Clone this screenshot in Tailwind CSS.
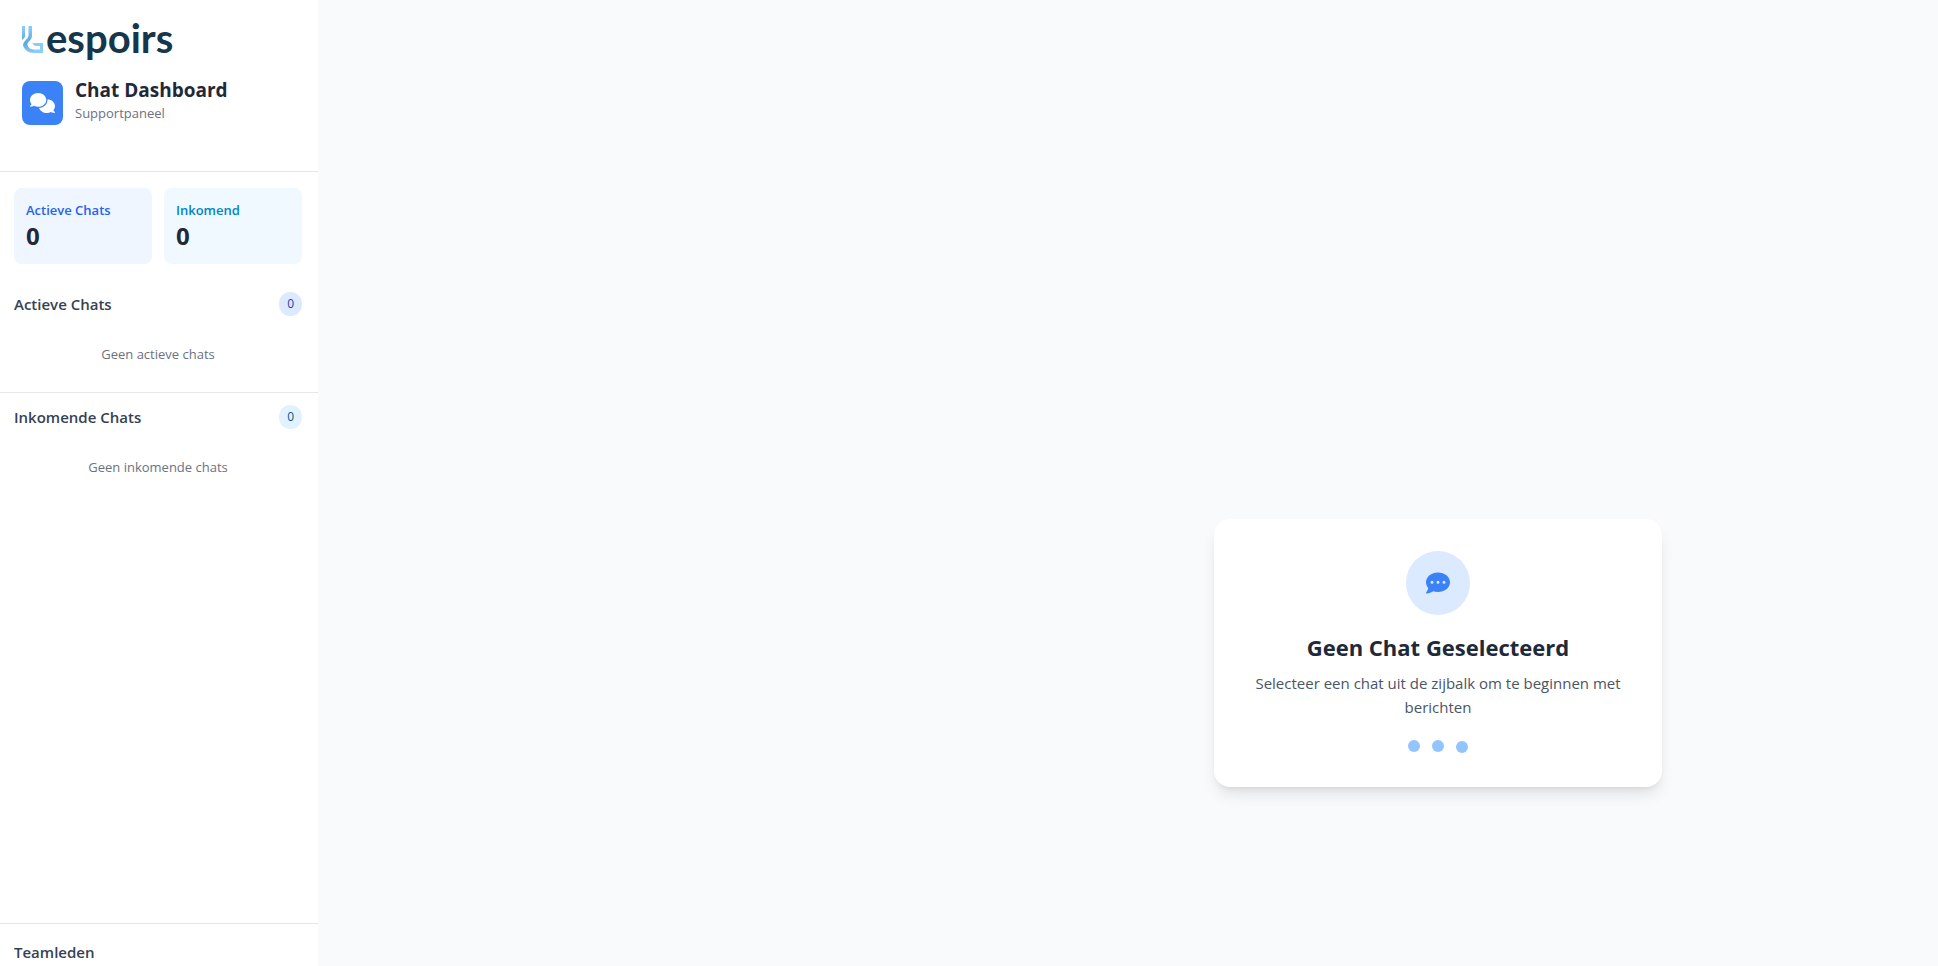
<!DOCTYPE html>
<html lang="nl">

    <head>
        <meta charset="UTF-8" />
        <meta name="viewport" content="width=device-width, initial-scale=1.0" />
        <title>Chat Dashboard</title>
        <script
            src="https://cdn.jsdelivr.net/npm/@tailwindcss/browser@4"></script>
    </head>

    <body
        class="flex h-screen overflow-hidden bg-[#f9fafb] font-['Segoe_UI','Open_Sans','Noto_Sans',sans-serif] text-gray-800">

        <!-- Sidebar -->
        <aside class="flex w-[318px] shrink-0 flex-col bg-white">
            <header class="border-b border-[#e5e7eb] px-[22px] pt-6 pb-[46px]">
                <a href="#" class="flex h-9 items-start" aria-label="Lespoirs">
                    <svg class="h-9 w-6 shrink-0" viewBox="0 0 24 36"
                        fill="none">
                        <defs>
                            <linearGradient id="stem" x1="0" y1="2" x2="0"
                                y2="29" gradientUnits="userSpaceOnUse">
                                <stop offset="0" stop-color="#8fd0fa" />
                                <stop offset=".4" stop-color="#6bb4e6" />
                                <stop offset=".65" stop-color="#5aa9e0" />
                                <stop offset="1" stop-color="#8bcdfa" />
                            </linearGradient>
                        </defs>
                        <path fill="url(#stem)" d="M0 2h3v10c0 1.500-1 2.500-3 4z" />
                        <path fill="url(#stem)"
                            d="M6.500 2H10v9c0 3-1 4.500-3 6.500-1.500 1.500-1.800 2.500-1.400 3.500.8 3 3 4.500 6.400 4.500V29C6 29 2.500 26 1 21.500c.2-2.200 1-3.800 3-5.800 1.800-1.800 2.500-2.700 2.500-4.700z" />
                        <path fill="#8bcdfa"
                            d="M11.500 25.500H18v-3.500h-5L10 19h11v10h-9.500z" />
                    </svg>
                    <span
                        class="font-[Lato,sans-serif] text-[40px] leading-7 font-bold text-[#15364c]">espoirs</span>
                </a>
                <div class="mt-4 flex items-end gap-3">
                    <div
                        class="mt-[5px] rounded-lg bg-[#3b82f6] px-2 py-3 text-white">
                        <svg class="h-5 w-[25px]" viewBox="0 0 640 512"
                            fill="currentColor">
                            <path
                                d="M208 352c114.900 0 208-78.800 208-176S322.900 0 208 0S0 78.800 0 176c0 38.600 14.700 74.300 39.600 103.400c-3.500 9.400-8.700 17.700-14.200 24.700c-4.800 6.200-9.700 11-13.300 14.300c-1.800 1.600-3.300 2.900-4.300 3.700c-.5 .4-.9 .7-1.100 .8l-.2 .2C1 327.200-1.400 334.400 .8 340.900S9.100 352 16 352c21.800 0 43.800-5.600 62.100-12.500c9.200-3.500 17.800-7.400 25.200-11.400C134.100 343.300 169.800 352 208 352zM448 176c0 112.300-99.100 196.900-216.500 207C255.800 457.400 336.400 512 432 512c38.200 0 73.900-8.700 104.700-23.900c7.500 4 16 7.900 25.200 11.400c18.300 6.900 40.300 12.500 62.100 12.500c6.900 0 13.100-4.500 15.200-11.100c2.100-6.600-.2-13.800-5.800-17.900l-.2-.2c-.2-.2-.6-.4-1.100-.8c-1-.8-2.500-2-4.300-3.700c-3.600-3.300-8.500-8.100-13.300-14.300c-5.500-7-10.700-15.400-14.200-24.700c24.900-29 39.600-64.700 39.600-103.400c0-92.800-84.900-168.900-192.600-175.500c.4 5.100 .6 10.300 .6 15.500z" />
                        </svg>
                    </div>
                    <div class="self-start">
                        <h1 class="text-[19px] leading-7 font-bold">Chat
                            Dashboard</h1>
                        <p class="text-[13px] leading-[18px] text-gray-500">Supportpaneel</p>
                    </div>
                </div>
            </header>

            <div class="grid grid-cols-2 gap-3 py-4 pr-4 pl-[14px]">
                <div class="rounded-lg bg-[#eff6ff] p-3">
                    <p
                        class="text-[13px] leading-5 font-semibold text-[#2563eb]">Actieve
                        Chats</p>
                    <p class="text-2xl font-bold">0</p>
                </div>
                <div class="rounded-lg bg-[#f0f9ff] p-3">
                    <p
                        class="text-[13px] leading-5 font-semibold text-[#0284c7]">Inkomend</p>
                    <p class="text-2xl font-bold">0</p>
                </div>
            </div>

            <section class="border-b border-[#e5e7eb] py-3 pr-4 pl-[14px]">
                <div class="mb-3 flex items-center justify-between">
                    <h2
                        class="text-[15px] leading-6 font-semibold text-gray-700">Actieve
                        Chats</h2>
                    <span
                        class="rounded-full bg-[#dbeafe] px-2 py-1 text-xs leading-4 text-[#1e40af]">0</span>
                </div>
                <p
                    class="py-4 text-center text-[13px] leading-5 text-gray-500">Geen
                    actieve chats</p>
            </section>

            <section class="flex-1 py-3 pr-4 pl-[14px]">
                <div class="mb-3 flex items-center justify-between">
                    <h2
                        class="text-[15px] leading-6 font-semibold text-gray-700">Inkomende
                        Chats</h2>
                    <span
                        class="rounded-full bg-[#e0f2fe] px-2 py-1 text-xs leading-4 text-[#075985]">0</span>
                </div>
                <p
                    class="py-4 text-center text-[13px] leading-5 text-gray-500">Geen
                    inkomende chats</p>
            </section>

            <section class="border-t border-[#e5e7eb] pt-4 pr-4 pb-[2px] pl-[14px]">
                <h2
                    class="text-[15px] leading-6 font-semibold text-gray-700">Teamleden</h2>
            </section>
        </aside>

        <!-- Empty state -->
        <main
            class="grid flex-1 grid-cols-[31fr_50fr] grid-rows-[170fr_313fr]">
            <div
                class="col-start-2 row-start-2 flex items-center justify-center">
                <div
                    class="w-full max-w-md rounded-2xl bg-white p-8 text-center shadow-lg">
                    <div
                        class="mx-auto mb-4 flex size-16 items-center justify-center rounded-full bg-[#dbeafe]">
                        <svg class="size-6 text-[#3b82f6]" viewBox="0 0 512 512"
                            fill="currentColor">
                            <path
                                d="M256 448c141.400 0 256-93.100 256-208S397.400 32 256 32S0 125.100 0 240c0 45.100 17.700 86.800 47.700 120.900c-1.900 24.500-11.400 46.300-21.400 62.900c-5.500 9.200-11.100 16.600-15.200 21.600c-2.100 2.500-3.700 4.400-4.900 5.700c-.6 .6-1 1.100-1.300 1.400l-.3 .3c-4.600 4.600-5.900 11.400-3.400 17.400c2.500 6 8.300 9.900 14.800 9.900c28.700 0 57.600-8.900 81.600-19.300c22.900-10 42.400-21.900 54.300-30.600c31.800 11.500 67 17.900 104.100 17.900zM128 208a32 32 0 1 1 0 64 32 32 0 1 1 0-64zm128 0a32 32 0 1 1 0 64 32 32 0 1 1 0-64zm96 32a32 32 0 1 1 64 0 32 32 0 1 1-64 0z" />
                        </svg>
                    </div>
                    <h2 class="mb-2 text-[22px] leading-8 font-bold">Geen Chat
                        Geselecteerd</h2>
                    <p class="text-[15px] leading-6 text-gray-600">Selecteer een
                        chat uit de zijbalk om te beginnen met berichten</p>
                    <!-- typing dots, each at its own point of the bounce -->
                    <div class="mt-6 flex justify-center gap-3">
                        <span
                            class="size-3 -translate-y-[3px] rounded-full bg-[#93c5fd]"></span>
                        <span
                            class="size-3 -translate-y-[3px] rounded-full bg-[#93c5fd]"></span>
                        <span
                            class="size-3 -translate-y-[2px] rounded-full bg-[#93c5fd]"></span>
                    </div>
                </div>
            </div>
        </main>

    </body>

</html>
